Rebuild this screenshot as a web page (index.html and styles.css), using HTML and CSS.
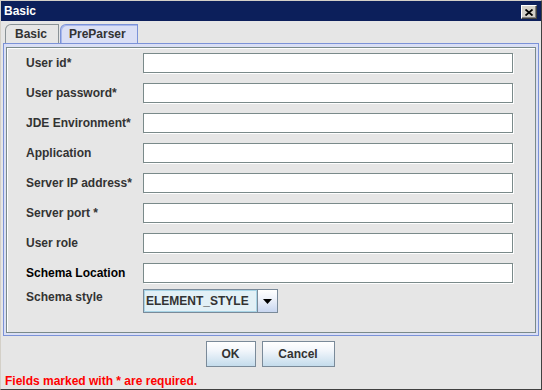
FILE: index.html
```html
<!DOCTYPE html>
<html>
<head>
  <title>Basic</title>
  <link rel="stylesheet" href="styles.css">
</head>
<body>
  <div class="window">
    <div class="titlebar">
      <span class="title">Basic</span>
      <button class="close-btn" aria-label="Close">
        <svg width="8" height="7" viewBox="0 0 8 7">
          <path d="M0.5 0.5 L7.5 6.5 M7.5 0.5 L0.5 6.5" stroke="#000" stroke-width="1.8" fill="none"/>
        </svg>
      </button>
    </div>

    <div class="tabs">
      <div class="tab">Basic</div>
      <div class="tab selected">PreParser</div>
    </div>

    <div class="tab-panel">
      <div class="form">
        <label class="field-label">User id*</label>
        <input type="text" class="text-field">

        <label class="field-label">User password*</label>
        <input type="password" class="text-field">

        <label class="field-label">JDE Environment*</label>
        <input type="text" class="text-field">

        <label class="field-label">Application</label>
        <input type="text" class="text-field">

        <label class="field-label">Server IP address*</label>
        <input type="text" class="text-field">

        <label class="field-label">Server port *</label>
        <input type="text" class="text-field">

        <label class="field-label">User role</label>
        <input type="text" class="text-field">

        <label class="field-label dark">Schema Location</label>
        <input type="text" class="text-field">

        <label class="field-label combo-label">Schema style</label>
        <div class="combo">
          <span class="combo-value">ELEMENT_STYLE</span>
          <span class="combo-arrow">
            <svg width="9" height="5" viewBox="0 0 9 5"><path d="M0 0 H9 L4.5 5 Z" fill="#000"/></svg>
          </span>
        </div>
      </div>
    </div>

    <div class="button-group">
      <button class="btn ok-btn">OK</button>
      <button class="btn cancel-btn">Cancel</button>
    </div>

    <div class="required-note">Fields marked with * are required.</div>
  </div>
</body>
</html>
```

FILE: styles.css
```css
body {
  margin: 0;
  font-family: "Liberation Sans", Arial, sans-serif;
  font-size: 12px;
  background: #e6e6e6;
}

.window {
  width: 542px;
  height: 390px;
  box-sizing: border-box;
  border: 1px solid #d4d0c8;
  border-right-color: #404040;
  border-bottom-color: #404040;
  background: #e6e6e6;
  display: flex;
  flex-direction: column;
}

.titlebar {
  height: 20px;
  background: #0c1f5b;
  display: flex;
  align-items: center;
  justify-content: space-between;
  padding: 0 3px 0 3px;
}

.title {
  color: #fff;
  font-weight: bold;
  font-size: 12px;
}

.close-btn {
  width: 16px;
  height: 14px;
  padding: 0;
  margin-top: 2px;
  margin-right: 1px;
  background: #d4d0c8;
  border: 1px solid;
  border-color: #fff #404040 #404040 #fff;
  box-shadow: inset -1px -1px 0 #808080;
  display: flex;
  align-items: center;
  justify-content: center;
}

/* Tabs */
.tabs {
  display: flex;
  gap: 1px;
  margin-top: 3px;
  padding-left: 4px;
  height: 19px;
}

.tab {
  box-sizing: border-box;
  height: 19px;
  padding: 0 10px 0 9px;
  border: 1px solid #8a9296;
  border-bottom: none;
  border-top-left-radius: 6px;
  color: #333;
  font-weight: bold;
  font-size: 12px;
  line-height: 18px;
  width: 54px;
}

.tab.selected {
  width: 78px;
  padding-left: 8px;
  background: #dadff5;
  border-color: #7b92d8;
  box-shadow: inset 1px 1px 0 #a8b8ec;
}

/* Tab content */
.tab-panel {
  height: 293px;
  box-sizing: border-box;
  margin: 0 2px;
  border: 1px solid #7b92d8;
  padding: 3px 2px 2px 2px;
  background: #dadff5;
}

.form {
  height: 100%;
  box-sizing: border-box;
  border: 1px solid #7a8a8a;
  box-shadow: inset 1px 1px 0 #fff;
  background: #e6e6e6;
  padding: 5px 0 0 19px;
  display: grid;
  grid-template-columns: 117px 370px;
  grid-auto-rows: 20px;
  row-gap: 10px;
  align-items: center;
}

.field-label {
  color: #333;
  font-weight: bold;
  font-size: 12px;
}

.field-label.dark {
  color: #000;
}

.text-field {
  box-sizing: border-box;
  width: 370px;
  height: 20px;
  margin: 0;
  border: 1px solid #7a8a8a;
  box-shadow: 1px 1px 0 #fff;
  background: #fff;
}

.combo-label {
  margin-top: -8px;
  height: 24px;
  line-height: 20px;
}

.combo {
  margin-top: -4px;
  width: 135px;
  height: 24px;
  box-sizing: border-box;
  border: 1px solid #7a8a99;
  display: flex;
}

.combo-value {
  flex: 1;
  background: #e2f0f6;
  border: 1px solid #a8d4e6;
  color: #333;
  font-weight: bold;
  font-size: 12px;
  line-height: 20px;
  padding-left: 1px;
}

.combo-arrow {
  width: 19px;
  border-left: 1px solid #7a8a99;
  background: linear-gradient(to bottom, #ffffff 0%, #eef2fa 40%, #c8d6f0 100%);
  display: flex;
  align-items: center;
  justify-content: center;
}

/* Buttons */
.button-group {
  display: flex;
  justify-content: center;
  gap: 6px;
  margin-top: 5px;
  padding-right: 2px;
}

.btn {
  height: 26px;
  box-sizing: border-box;
  border: 1px solid #7a8a99;
  background: linear-gradient(to bottom, #ffffff 0%, #f2f6fb 35%, #c4dcec 100%);
  color: #333;
  font-family: "Liberation Sans", Arial, sans-serif;
  font-weight: bold;
  font-size: 12px;
  padding: 0;
}

.ok-btn {
  width: 50px;
}

.cancel-btn {
  width: 73px;
}

.required-note {
  margin-top: 7px;
  padding-left: 4px;
  color: #ff0000;
  font-weight: bold;
  font-size: 12px;
  line-height: 14px;
}
```
